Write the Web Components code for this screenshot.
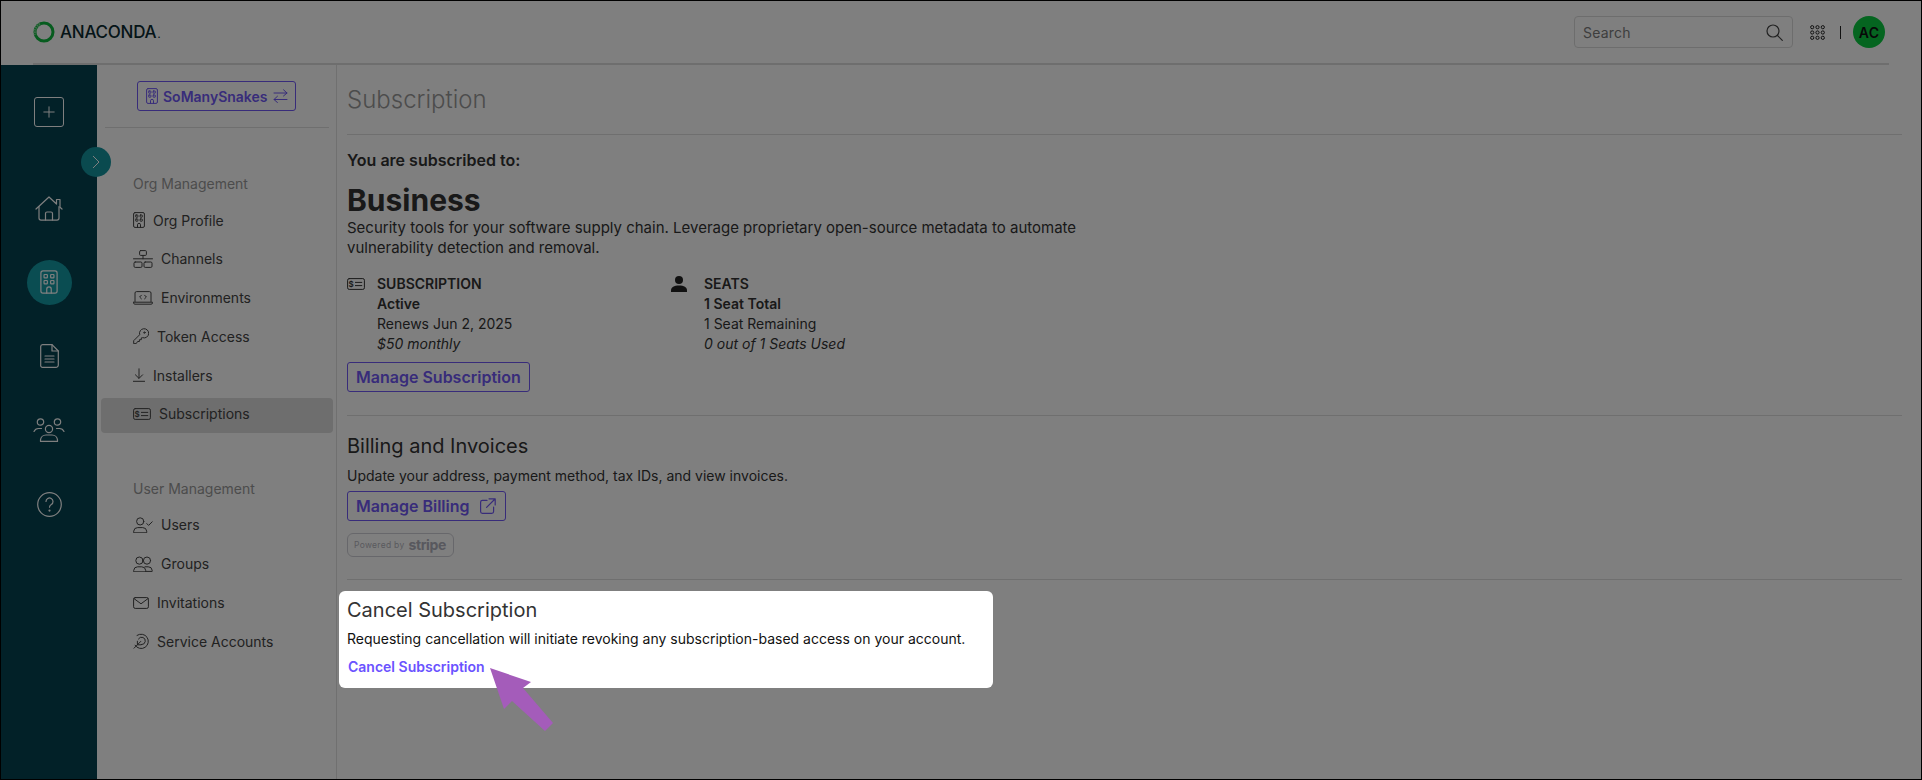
<!DOCTYPE html>
<html>
<head>
<meta charset="utf-8">
<title>Subscription</title>
<style>
  html, body { margin: 0; height: 100%; overflow: hidden; background: #fff; }
  body { font-family: Inter, "Liberation Sans", sans-serif; }
</style>
</head>
<body>
<anaconda-app>
  <app-header slot="top"></app-header>
  <side-rail slot="rail"></side-rail>
  <org-panel slot="panel"></org-panel>
  <subscription-page slot="main"></subscription-page>
</anaconda-app>

<script>
  const S = 'fill="none" stroke="currentColor" stroke-linecap="round" stroke-linejoin="round"';
  const building = `<rect x=".6" y=".6" width="10.8" height="14.8" rx="1.4"/>
    <rect x="2.7" y="3" width="2.2" height="2.2" rx=".4"/><rect x="7.1" y="3" width="2.2" height="2.2" rx=".4"/>
    <rect x="2.7" y="7" width="2.2" height="2.2" rx=".4"/><rect x="7.1" y="7" width="2.2" height="2.2" rx=".4"/>
    <path d="M4.5 15.4v-2.6a1.5 1.5 0 0 1 3 0v2.6"/>`;
  const card = `<rect x=".6" y=".6" width="16.8" height="10.8" rx="1.6"/>
    <text x="4.2" y="8.8" font-size="8" font-weight="600" text-anchor="middle" fill="currentColor" stroke="none" font-family="Inter">$</text>
    <path d="M8.4 4.4h6.4M8.4 7.6h6.4"/>`;
  const icons = {
    building: [12, 16, building],
    channels: [20, 18, `<rect x="6.6" y=".6" width="6.8" height="4.8" rx="1"/><path d="M10 5.4v3.4M.5 8.8h19"/>
      <rect x="1" y="12" width="8" height="5.4" rx="1.2"/><rect x="11" y="12" width="8" height="5.4" rx="1.2"/>`],
    env: [20, 14, `<path d="M2 10.5V2A1.5 1.5 0 0 1 3.5.6h13A1.5 1.5 0 0 1 18 2v8.5"/><path d="M.5 11.2h19v.6a1.4 1.4 0 0 1-1.4 1.4H1.9a1.4 1.4 0 0 1-1.4-1.4z"/>
      <path d="M8.4 4.2 6.6 6l1.8 1.8M11.6 4.2 13.4 6l-1.8 1.8"/>`],
    key: [16, 16, `<path d="M.7 15.3v-2.6l6-6a4.6 4.6 0 1 1 3 3l-1.4.2v1.8H6.4v1.8H4.6l-1.2 1.8z"/><circle cx="11.4" cy="4.6" r=".7"/>`],
    install: [12, 14, `<path d="M6 .8v9.4M2.4 6.8 6 10.4l3.6-3.6M.4 13.3h11.2"/>`],
    card: [18, 12, card],
    user: [20, 16, `<circle cx="7.2" cy="4.4" r="3.6"/><path d="M.7 15.4v-1.2a4 4 0 0 1 4-3.6h5a4 4 0 0 1 4 3.6v1.2z"/><path d="m13.8 6.6 1.8 1.8 3.6-3.6"/>`],
    group: [20, 16, `<circle cx="6.4" cy="4.6" r="3.6"/><circle cx="14" cy="4.6" r="3.6"/><path d="M.7 15.4v-1a4 4 0 0 1 4-3.6h4a4 4 0 0 1 4 3.6v1z"/><path d="M12 10.8h3.2a4 4 0 0 1 4 3.6v1h-6.6"/>`],
    mail: [16, 12, `<rect x=".6" y=".6" width="14.8" height="10.8" rx="1.6"/><path d="m1 1.6 7 5.2 7-5.2"/>`],
    target: [16, 16, `<path d="M4 2.4A7.2 7.2 0 1 1 2 12.2"/><path d="M5.4 6A3.7 3.7 0 1 1 8.4 11.6"/><path d="M1 15.2 7.8 8.4M4.4 8.2v3.6H8"/>`],
  };
  const svg = (name, w, h) => {
    const [vw, vh, body] = icons[name];
    return `<svg width="${w || vw}" height="${h || vh}" viewBox="0 0 ${vw} ${vh}" ${S}>${body}</svg>`;
  };

  customElements.define("anaconda-app", class extends HTMLElement {
    constructor() {
      super();
      this.attachShadow({mode: 'open'}).innerHTML = `
        <style>
          :host { display: block; box-sizing: border-box; width: 1922px; height: 780px; border: 1px solid #000; overflow: hidden; position: relative; background: #fff; }
          .body { display: flex; height: 714px; }
        </style>
        <slot name="top"></slot>
        <div class="body">
          <slot name="rail"></slot>
          <slot name="panel"></slot>
          <slot name="main"></slot>
        </div>`;
    }
  });

  customElements.define("app-header", class extends HTMLElement {
    constructor() {
      super();
      this.attachShadow({mode: 'open'}).innerHTML = `
        <style>
          :host { display: block; height: 64px; padding: 0 32px; background: #fff; }
          .bar { box-sizing: border-box; height: 64px; border-bottom: 2px solid #dcdcdc; display: flex; align-items: center; justify-content: space-between; }
          .logo { display: flex; align-items: center; gap: 5px; color: #0b2a30; font-size: 17px; font-weight: 500; letter-spacing: -.25px; }
          .logo i { font-style: normal; font-size: 10px; margin-left: 1px; }
          .right { display: flex; align-items: center; padding-right: 4px; }
          .search { box-sizing: border-box; width: 219px; height: 32px; border: 1px solid #dadada; border-radius: 4px; display: flex; align-items: center; justify-content: space-between; padding: 0 9px 0 8px; font-size: 14px; color: #7c7c7c; letter-spacing: .2px; }
          .search svg { color: #444; }
          .grid { margin-left: 17px; color: #222; display: flex; }
          .sep { width: 1px; height: 13px; background: #222; margin: 0 12px 0 15px; }
          .avatar { width: 32px; height: 32px; border-radius: 50%; background: #0acb41; color: #111; font-size: 14px; font-weight: 600; display: flex; align-items: center; justify-content: center; letter-spacing: .4px; }
        </style>
        <div class="bar">
          <div class="logo">
            <svg width="22" height="22" viewBox="0 0 22 22" fill="none"><circle cx="11" cy="11" r="9" stroke="#0fb83f" stroke-width="3"/><path d="M7 3a9 9 0 0 0-4.6 10.6" stroke="#7fd694" stroke-width="3.2" stroke-dasharray="1.4 .9"/></svg>
            <span>ANACONDA<i>.</i></span>
          </div>
          <div class="right">
            <div class="search"><span>Search</span>
              <svg width="17" height="17" viewBox="0 0 17 17" fill="none" stroke="currentColor" stroke-width="1.2" stroke-linecap="round"><circle cx="7" cy="7" r="6"/><path d="m11.5 11.5 4.8 4.8"/></svg>
            </div>
            <div class="grid"><svg width="15" height="15" viewBox="0 0 15 15" fill="none" stroke="currentColor" stroke-width="1">
              <circle cx="2.2" cy="2.2" r="1.6"/><circle cx="7.5" cy="2.2" r="1.6"/><circle cx="12.8" cy="2.2" r="1.6"/>
              <circle cx="2.2" cy="7.5" r="1.6"/><circle cx="7.5" cy="7.5" r="1.6"/><circle cx="12.8" cy="7.5" r="1.6"/>
              <circle cx="2.2" cy="12.8" r="1.6"/><circle cx="7.5" cy="12.8" r="1.6"/><circle cx="12.8" cy="12.8" r="1.6"/></svg></div>
            <div class="sep"></div>
            <div class="avatar">AC</div>
          </div>
        </div>`;
    }
  });

  customElements.define("side-rail", class extends HTMLElement {
    constructor() {
      super();
      this.attachShadow({mode: 'open'}).innerHTML = `
        <style>
          :host { display: flex; flex-direction: column; align-items: center; flex: none; width: 96px; background: #044250; color: #fff; position: relative; box-sizing: border-box; padding-top: 32px; }
          .add { box-sizing: border-box; width: 30px; height: 30px; border: 1px solid #fff; border-radius: 3px; display: flex; align-items: center; justify-content: center; margin-bottom: 58.5px; }
          .items { display: flex; flex-direction: column; gap: 29px; }
          .item { width: 45px; height: 45px; border-radius: 50%; display: flex; align-items: center; justify-content: center; }
          .item.on { background: #149aa4; }
          .toggle { position: absolute; left: 80px; top: 82px; width: 30px; height: 30px; border-radius: 50%; background: #14949f; display: flex; align-items: center; justify-content: center; }
        </style>
        <div class="add"><svg width="12" height="12" viewBox="0 0 12 12" stroke="currentColor" stroke-width="1" stroke-linecap="round"><path d="M6 .8v10.4M.8 6h10.4"/></svg></div>
        <div class="toggle"><svg width="8" height="14" viewBox="0 0 8 14" fill="none" stroke="currentColor" stroke-width="1"><path d="m1 1 6 6-6 6"/></svg></div>
        <div class="items">
          <div class="item"><svg width="28" height="25" viewBox="0 0 28 25" ${S} stroke-width="1.2"><path d="M1 13 14 1l7.5 7V3.5h3.5v7.7L27 13"/><path d="M4 10.5v11.6a2 2 0 0 0 2 2h16a2 2 0 0 0 2-2V10.5"/><path d="M10.5 24v-6.5a1.5 1.5 0 0 1 1.5-1.5h4a1.5 1.5 0 0 1 1.5 1.5V24"/></svg></div>
          <div class="item on"><svg width="18" height="24" viewBox="0 0 12 16" ${S} stroke-width=".8">${building}</svg></div>
          <div class="item"><svg width="19" height="24" viewBox="0 0 19 24" ${S} stroke-width="1.2"><path d="M2.6.7h9.4l6.3 6.3v14a2.4 2.4 0 0 1-2.4 2.4H2.6A2 2 0 0 1 .7 21V2.6A2 2 0 0 1 2.6.7z"/><path d="M12 .7V7h6.3M5 12h9M5 15h9M5 18h9"/></svg></div>
          <div class="item"><svg width="32" height="24" viewBox="0 0 32 24" ${S} stroke-width="1.2"><circle cx="7.5" cy="4" r="3.2"/><circle cx="24.5" cy="4" r="3.2"/><circle cx="16" cy="11" r="3.6"/><path d="M1 13.5a5 5 0 0 1 4.5-3h3M31 13.5a5 5 0 0 0-4.5-3h-3"/><path d="M7.5 23.4v-1.5a5.5 5.5 0 0 1 5.5-4.9h6a5.5 5.5 0 0 1 5.5 4.9v1.5z"/></svg></div>
          <div class="item"><svg width="25" height="25" viewBox="0 0 25 25" ${S} stroke-width="1.2"><circle cx="12.5" cy="12.5" r="11.8"/><path d="M9 9.5a3.5 3.5 0 1 1 5.3 3c-1.2.7-1.8 1.3-1.8 2.7"/><circle cx="12.5" cy="18.6" r=".5"/></svg></div>
        </div>`;
    }
  });

  customElements.define("nav-item", class extends HTMLElement {
    constructor() {
      super();
      this.attachShadow({mode: 'open'}).innerHTML = `
        <style>
          :host { display: flex; align-items: center; gap: 8px; box-sizing: border-box; height: 35px; padding: 0 0 3px 32px; border-radius: 4px; font-size: 14px; color: #444; }
          :host([active]) { background: #dcdcdc; }
          svg { flex: none; stroke-width: 1; display: block; }
        </style>
        ${svg(this.getAttribute('icon'))}
        <slot></slot>`;
    }
  });

  customElements.define("org-panel", class extends HTMLElement {
    constructor() {
      super();
      this.attachShadow({mode: 'open'}).innerHTML = `
        <style>
          :host { display: block; flex: none; box-sizing: border-box; width: 240px; border-right: 1px solid #e0e0e0; padding: 16px 3px 0 4px; }
          .org { box-sizing: border-box; margin-left: 36px; width: 159px; height: 30px; border: 1px solid #7058f5; border-radius: 3px; color: #7058f5; font-size: 14px; font-weight: 600; display: flex; align-items: center; gap: 5px; padding-left: 8px; }
          .org svg { stroke-width: 1; flex: none; }
          hr { border: 0; border-top: 1px solid #dedede; margin: 16px 4px 0; }
          h4 { margin: 46px 0 0 32px; font-size: 14px; line-height: 20px; font-weight: 400; color: #999; }
          .list { display: flex; flex-direction: column; gap: 3.8px; margin-top: 10px; }
        </style>
        <div class="org">${svg('building')}<span>SoManySnakes</span>
          <svg width="15" height="14" viewBox="0 0 15 14" ${S}><path d="M1 4h13M10.5 .8 14 4l-3.5 3M14 10.5H1M4.5 7.2 1 10.5 4.5 13.6"/></svg></div>
        <hr>
        <h4>Org Management</h4>
        <div class="list">
          <nav-item icon="building">Org Profile</nav-item>
          <nav-item icon="channels">Channels</nav-item>
          <nav-item icon="env">Environments</nav-item>
          <nav-item icon="key">Token Access</nav-item>
          <nav-item icon="install">Installers</nav-item>
          <nav-item icon="card" active>Subscriptions</nav-item>
        </div>
        <h4>User Management</h4>
        <div class="list">
          <nav-item icon="user">Users</nav-item>
          <nav-item icon="group">Groups</nav-item>
          <nav-item icon="mail">Invitations</nav-item>
          <nav-item icon="target">Service Accounts</nav-item>
        </div>`;
    }
  });

  customElements.define("info-block", class extends HTMLElement {
    constructor() {
      super();
      this.attachShadow({mode: 'open'}).innerHTML = `
        <style>
          :host { display: flex; font-size: 14px; line-height: 20px; color: #333; }
          .icon { flex: none; width: var(--icon-w, 30px); height: 20px; display: flex; align-items: center; }
          ::slotted(b) { font-weight: 600; }
          .col { display: flex; flex-direction: column; }
        </style>
        <div class="icon"><slot name="icon"></slot></div>
        <div class="col"><slot></slot></div>`;
    }
  });

  customElements.define("outline-button", class extends HTMLElement {
    constructor() {
      super();
      this.attachShadow({mode: 'open'}).innerHTML = `
        <style>
          :host { display: inline-flex; align-items: center; box-sizing: border-box; height: 30px; padding: 0 8px; border: 1px solid #7058f5; border-radius: 3px; color: #7058f5; font-size: 16px; font-weight: 600; white-space: nowrap; }
        </style>
        <slot></slot>`;
    }
  });

  customElements.define("subscription-page", class extends HTMLElement {
    constructor() {
      super();
      this.attachShadow({mode: 'open'}).innerHTML = `
        <style>
          :host { display: block; flex: 1; padding: 19px 19px 0 10px; color: #333; font-size: 14px; line-height: 20px; }
          h1 { margin: 0; font-size: 24px; line-height: 32px; font-weight: 300; color: #999; }
          hr { border: 0; border-top: 1px solid #dedede; margin: 0; }
          .sub { margin-top: 15px; font-size: 16px; font-weight: 600; }
          .plan { margin: 10px 0 -2px; font-size: 30px; line-height: 40px; font-weight: 700; }
          .desc { width: 760px; font-size: 15px; }
          .info { display: flex; margin-top: 16px; }
          .info info-block:first-child { width: 324px; }
          .info span, .info b { display: block; white-space: nowrap; }
          h2 { margin: 16px 0 0; font-size: 20px; line-height: 28px; font-weight: 400; }
          .stripe { box-sizing: border-box; display: flex; align-items: center; width: 107px; height: 24px; margin-top: 12px; padding-left: 6px; border: 1px solid #cfcfd6; border-radius: 6px; color: #b4b4bc; font-size: 8.5px; letter-spacing: .3px; gap: 4px; }
          .stripe b { font-size: 14px; font-weight: 700; letter-spacing: -.4px; color: #b0b0bc; }
          .cancel { position: relative; z-index: 10; box-sizing: border-box; width: 654px; height: 97px; margin: 11px 0 0 -8px; padding: 5px 8px 0; border-radius: 6px; background: #fff; box-shadow: 0 0 0 3000px rgba(0,0,0,.5); color: #111; }
          .cancel h2 { margin: 0; color: #333; }
          .cancel p { margin: 5px 0 8px; }
          .cancel a { margin-left: 1px; color: #6a52ff; font-weight: 600; }
          .arrow { position: absolute; left: 150px; top: 76px; }
        </style>
        <h1>Subscription</h1>
        <hr style="margin-top:18px">
        <div class="sub">You are subscribed to:</div>
        <div class="plan">Business</div>
        <div class="desc">Security tools for your software supply chain. Leverage proprietary open-source metadata to automate vulnerability detection and removal.</div>
        <div class="info">
          <info-block>
            <svg slot="icon" width="18" height="12" viewBox="0 0 18 12" ${S} stroke-width="1">${card}</svg>
            <b>SUBSCRIPTION</b><b>Active</b><span>Renews Jun 2, 2025</span><span style="font-style:italic">$50 monthly</span>
          </info-block>
          <info-block style="--icon-w:33px">
            <svg slot="icon" width="16" height="16" viewBox="0 0 16 16" fill="#222"><circle cx="8" cy="4" r="4"/><path d="M0 16v-1.5C0 11.5 3 9.6 8 9.6s8 1.9 8 4.9V16z"/></svg>
            <b>SEATS</b><b>1 Seat Total</b><span>1 Seat Remaining</span><span style="font-style:italic">0 out of 1 Seats Used</span>
          </info-block>
        </div>
        <outline-button style="margin-top:8px">Manage Subscription</outline-button>
        <hr style="margin-top:23px">
        <h2>Billing and Invoices</h2>
        <div style="margin-top:6px">Update your address, payment method, tax IDs, and view invoices.</div>
        <outline-button style="margin-top:5px;display:flex;width:159px"><span>Manage Billing</span>
          <svg style="margin-left:10px;flex:none" width="16" height="16" viewBox="0 0 16 16" ${S} stroke-width="1.2"><path d="M7 2.4H2.4A1.8 1.8 0 0 0 .6 4.2v9.4a1.8 1.8 0 0 0 1.8 1.8h9.4a1.8 1.8 0 0 0 1.8-1.8V9M9 .8h6.2V7M15 1 6.6 9.4"/></svg>
        </outline-button>
        <div class="stripe"><span>Powered by</span><b>stripe</b></div>
        <hr style="margin-top:22px">
        <div class="cancel">
          <h2>Cancel Subscription</h2>
          <p>Requesting cancellation will initiate revoking any subscription-based access on your account.</p>
          <a>Cancel Subscription</a>
          <svg class="arrow" width="66" height="66" viewBox="0 0 66 66"><polygon fill="#a45cba" points="1,1 42,15 34,21 64,56 56,64 23,34 15,42"/></svg>
        </div>`;
    }
  });
</script>
</body>
</html>
